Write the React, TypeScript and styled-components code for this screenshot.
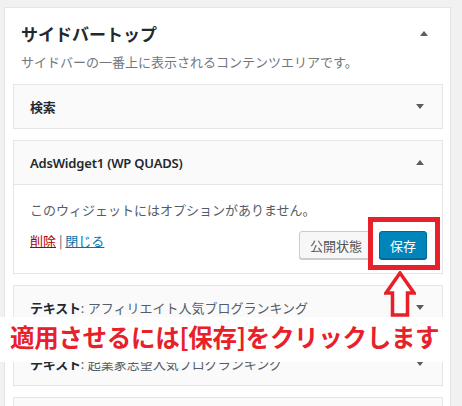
import styled, { createGlobalStyle } from "styled-components";

const GlobalStyle = createGlobalStyle`
  html, body {
    margin: 0;
    padding: 0;
    background: #f1f1f1;
  }
  body {
    font-family: "Noto Sans", "Noto Sans CJK JP", sans-serif;
    color: #23282d;
  }
`;

const Page = styled.div`
  position: relative;
  width: 462px;
  height: 406px;
  overflow: hidden;
`;

const Area = styled.div`
  margin: 7px 0 0 4px;
  width: 447px;
  min-height: 420px;
  background: #fff;
  border: 1px solid #e5e5e5;
  box-sizing: border-box;
`;

const AreaHead = styled.div`
  display: flex;
  align-items: center;
  justify-content: space-between;
  padding: 13px 22px 0 16px;
  height: 38px;
  box-sizing: border-box;
`;

const AreaTitle = styled.h2`
  margin: 0;
  font-family: "Noto Sans CJK JP", sans-serif;
  font-size: 17px;
  font-weight: 700;
  color: #23282d;
  line-height: 24px;
`;

const AreaDesc = styled.p`
  margin: 6px 0 0 16px;
  font-family: "Noto Sans CJK JP", sans-serif;
  font-size: 13px;
  line-height: 20px;
  color: #72777c;
`;

const WidgetList = styled.div`
  display: flex;
  flex-direction: column;
  gap: 11px;
  padding: 12px 7px 0 8px;
`;

const Widget = styled.div`
  border: 1px solid #e5e5e5;
  background: #fafafa;
`;

const WidgetTop = styled.div`
  display: flex;
  align-items: center;
  justify-content: space-between;
  height: 43px;
  padding: 0 18px 0 16px;
`;

const WidgetTitle = styled.h3`
  margin: 0;
  font-family: "Noto Sans", "Noto Sans CJK JP", sans-serif;
  font-size: 13px;
  font-weight: 600;
  letter-spacing: -0.2px;
  color: #23282d;
  white-space: nowrap;
`;

const InTitle = styled.span`
  font-weight: 400;
  letter-spacing: 0;
  color: #555d66;
`;

const Caret = styled.svg`
  width: 8px;
  height: 5px;
  flex: none;
`;

const WidgetInside = styled.div`
  background: #fff;
  border-top: 1px solid #e5e5e5;
  padding: 15px 15px 14px 16px;
`;

const NoOptions = styled.p`
  margin: 0;
  font-family: "Noto Sans CJK JP", sans-serif;
  font-size: 13px;
  line-height: 20px;
  color: #555d66;
`;

const Controls = styled.div`
  display: flex;
  align-items: center;
  justify-content: space-between;
  margin-top: 11px;
`;

const Links = styled.div`
  font-family: "Noto Sans CJK JP", sans-serif;
  font-size: 13px;
  color: #555d66;
  margin-top: -10px;
`;

const TextLink = styled.a<{ $danger?: boolean }>`
  color: ${(p) => (p.$danger ? "#a00" : "#0073aa")};
  text-decoration: underline;
`;

const Buttons = styled.div`
  display: flex;
  gap: 6px;
`;

const Button = styled.button<{ $primary?: boolean }>`
  height: 28px;
  padding: 0 10px;
  font-family: "Noto Sans CJK JP", sans-serif;
  font-size: 13px;
  border-radius: 3px;
  border: 1px solid ${(p) => (p.$primary ? "#006799" : "#ccc")};
  background: ${(p) => (p.$primary ? "#0085ba" : "#f7f7f7")};
  color: ${(p) => (p.$primary ? "#fff" : "#555")};
  box-shadow: ${(p) => (p.$primary ? "0 1px 0 #006799" : "0 1px 0 #ccc")};
  cursor: pointer;
`;

const Highlight = styled.div`
  position: absolute;
  left: 368px;
  top: 217px;
  width: 72px;
  height: 53px;
  border: 5px solid #e8202a;
  box-sizing: border-box;
`;

const Arrow = styled.svg`
  position: absolute;
  left: 384px;
  top: 271px;
  width: 32px;
  height: 46px;
`;

const Banner = styled.div`
  position: absolute;
  left: 0;
  top: 317px;
  width: 445px;
  height: 45px;
  background: #fff;
  display: flex;
  align-items: flex-start;
  padding: 4px 0 0 10px;
  box-sizing: border-box;
  font-family: "Noto Sans CJK JP", sans-serif;
  font-size: 24.5px;
  line-height: 32px;
  font-weight: 700;
  color: #e8202a;
  white-space: nowrap;
  letter-spacing: -0.3px;
`;

const CaretIcon = ({ up }: { up?: boolean }) => (
  <Caret viewBox="0 0 8 5">
    <path d={up ? "M0 5 L4 0 L8 5 Z" : "M0 0 L8 0 L4 5 Z"} fill="#555d66" />
  </Caret>
);

export default function App() {
  return (
    <Page>
      <GlobalStyle />
      <Area>
        <AreaHead>
          <AreaTitle>サイドバートップ</AreaTitle>
          <CaretIcon up />
        </AreaHead>
        <AreaDesc>サイドバーの一番上に表示されるコンテンツエリアです。</AreaDesc>
        <WidgetList>
          <Widget>
            <WidgetTop>
              <WidgetTitle>検索</WidgetTitle>
              <CaretIcon />
            </WidgetTop>
          </Widget>
          <Widget>
            <WidgetTop>
              <WidgetTitle>AdsWidget1 (WP QUADS)</WidgetTitle>
              <CaretIcon up />
            </WidgetTop>
            <WidgetInside>
              <NoOptions>このウィジェットにはオプションがありません。</NoOptions>
              <Controls>
                <Links>
                  <TextLink $danger>削除</TextLink> | <TextLink>閉じる</TextLink>
                </Links>
                <Buttons>
                  <Button>公開状態</Button>
                  <Button $primary>保存</Button>
                </Buttons>
              </Controls>
            </WidgetInside>
          </Widget>
          <Widget>
            <WidgetTop>
              <WidgetTitle>
                テキスト<InTitle>: アフィリエイト人気ブログランキング</InTitle>
              </WidgetTitle>
              <CaretIcon />
            </WidgetTop>
          </Widget>
          <Widget>
            <WidgetTop>
              <WidgetTitle>
                テキスト<InTitle>: 起業家志望人気ブログランキング</InTitle>
              </WidgetTitle>
              <CaretIcon />
            </WidgetTop>
          </Widget>
          <Widget>
            <WidgetTop />
          </Widget>
        </WidgetList>
      </Area>
      <Highlight />
      <Arrow viewBox="0 0 32 46">
        <path
          d="M16 2 L30 22 L23.5 22 L23.5 44 L8.5 44 L8.5 22 L2 22 Z"
          fill="#fff"
          stroke="#e8202a"
          strokeWidth="3.5"
          strokeLinejoin="miter"
        />
      </Arrow>
      <Banner>適用させるには[保存]をクリックします</Banner>
    </Page>
  );
}
